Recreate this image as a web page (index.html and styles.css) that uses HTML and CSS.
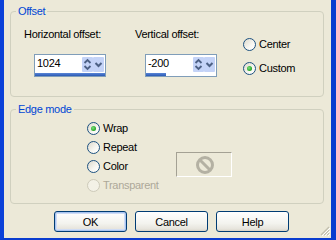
FILE: index.html
```html
<!DOCTYPE html>
<html lang="en">

<head>
    <meta charset="UTF-8" />
    <title>Offset</title>
    <link rel="stylesheet" href="styles.css">
</head>

<body>
    <div class="window">
        <fieldset class="group offset-group">
            <legend>Offset</legend>
            <div class="offset-body">
                <div class="field field-h">
                    <label>Horizontal offset:</label>
                    <div class="spin">
                        <div class="spin-top">
                            <span class="spin-value">1024</span>
                            <svg class="spin-btns" width="22" height="15" viewBox="0 0 22 15">
                                <rect x="0" y="0" width="11" height="15" rx="1" fill="#c4d3f7" />
                                <rect x="11" y="0" width="11" height="15" rx="1" fill="#c4d3f7" />
                                <path d="M2.5 6 L5.5 3 L8.5 6" fill="none" stroke="#4d6185" stroke-width="1.8" />
                                <path d="M2.5 9 L5.5 12 L8.5 9" fill="none" stroke="#4d6185" stroke-width="1.8" />
                                <path d="M13.5 6 L16.5 9 L19.5 6" fill="none" stroke="#4d6185" stroke-width="2" />
                            </svg>
                        </div>
                        <div class="spin-track"><div class="spin-bar" style="width: 100%"></div></div>
                    </div>
                </div>
                <div class="field field-v">
                    <label>Vertical offset:</label>
                    <div class="spin">
                        <div class="spin-top">
                            <span class="spin-value">-200</span>
                            <svg class="spin-btns" width="22" height="15" viewBox="0 0 22 15">
                                <rect x="0" y="0" width="11" height="15" rx="1" fill="#c4d3f7" />
                                <rect x="11" y="0" width="11" height="15" rx="1" fill="#c4d3f7" />
                                <path d="M2.5 6 L5.5 3 L8.5 6" fill="none" stroke="#4d6185" stroke-width="1.8" />
                                <path d="M2.5 9 L5.5 12 L8.5 9" fill="none" stroke="#4d6185" stroke-width="1.8" />
                                <path d="M13.5 6 L16.5 9 L19.5 6" fill="none" stroke="#4d6185" stroke-width="2" />
                            </svg>
                        </div>
                        <div class="spin-track"><div class="spin-bar" style="width: 28%"></div></div>
                    </div>
                </div>
                <div class="radio-col">
                    <div class="radio-row"><span class="radio"></span><span>Center</span></div>
                    <div class="radio-row"><span class="radio checked"></span><span>Custom</span></div>
                </div>
            </div>
        </fieldset>

        <fieldset class="group edge-group">
            <legend>Edge mode</legend>
            <div class="edge-body">
                <div class="radio-row"><span class="radio checked"></span><span>Wrap</span></div>
                <div class="radio-row"><span class="radio"></span><span>Repeat</span></div>
                <div class="radio-row">
                    <span class="radio"></span><span class="color-label">Color</span>
                    <div class="swatch">
                        <svg width="20" height="20" viewBox="0 0 20 20">
                            <circle cx="10" cy="10" r="7.5" fill="none" stroke="#b4b1a3" stroke-width="3" />
                            <path d="M5 5 L15 15" stroke="#b4b1a3" stroke-width="3" />
                        </svg>
                    </div>
                </div>
                <div class="radio-row disabled"><span class="radio"></span><span>Transparent</span></div>
            </div>
        </fieldset>

        <div class="buttons">
            <button class="btn default">OK</button>
            <button class="btn">Cancel</button>
            <button class="btn">Help</button>
            <svg class="grip" width="10" height="10" viewBox="0 0 10 10">
                <path d="M9 1 L1 9 M9 4 L4 9 M9 7 L7 9" stroke="#c2bfae" stroke-width="1.2" />
                <path d="M10 2 L2 10 M10 5 L5 10 M10 8 L8 10" stroke="#ffffff" stroke-width="1" />
            </svg>
        </div>
    </div>
</body>

</html>
```

FILE: styles.css
```css
* {
    box-sizing: border-box;
    margin: 0;
    padding: 0;
}

body {
    width: 336px;
    height: 240px;
    font-family: 'Liberation Sans', Arial, sans-serif;
    font-size: 11px;
    line-height: 13px;
    letter-spacing: -0.3px;
    color: #000;
    overflow: hidden;
}

.window {
    width: 336px;
    height: 240px;
    background-color: #ece9d8;
    border-left: 4px solid #0b41d8;
    border-right: 5px solid #0a3ccf;
    border-bottom: 2px solid #0a3ccf;
    display: flex;
    flex-direction: column;
}

.group {
    border: 1px solid #d0d0bf;
    border-radius: 4px;
    margin: 0 7px 0 6px;
    padding: 0;
    min-width: 0;
}

.group legend {
    color: #0046d5;
    padding: 0 2px;
    margin-left: 5px;
    line-height: 13px;
}

.offset-group {
    margin-top: 5px;
}

.offset-body {
    display: flex;
    padding: 10px 0 18px 13px;
}

.field {
    display: flex;
    flex-direction: column;
    align-items: flex-start;
}

.field-h {
    width: 111px;
}

.field-v {
    width: 108px;
}

.spin {
    width: 72px;
    height: 23px;
    margin: 13px 0 0 10px;
    border: 1px solid #7f9db9;
    background: #fff;
    display: flex;
    flex-direction: column;
}

.spin-top {
    height: 18px;
    display: flex;
    align-items: flex-start;
    justify-content: space-between;
    padding: 2px 1px 0 2px;
}

.spin-btns {
    display: block;
}

.spin-track {
    height: 3px;
}

.spin-bar {
    height: 3px;
    background: linear-gradient(#5a86d6, #2a59b5);
}

.radio-col {
    display: flex;
    flex-direction: column;
    gap: 5px;
    padding-top: 7px;
}

.radio-row {
    display: flex;
    align-items: center;
    height: 19px;
    gap: 3px;
}

.radio {
    width: 13px;
    height: 13px;
    border-radius: 50%;
    border: 1px solid #1c5180;
    background: linear-gradient(135deg, #dcd9cc, #f8f7f2 60%, #fff);
    display: flex;
    align-items: center;
    justify-content: center;
}

.radio.checked::after {
    content: '';
    width: 5px;
    height: 5px;
    border-radius: 50%;
    background: radial-gradient(circle at 40% 40%, #7ee27e, #21a121 70%);
}

.disabled {
    color: #aca899;
}

.disabled .radio {
    border-color: #cdcab9;
    background: #f3f1e6;
}

.edge-group {
    margin-top: 6px;
}

.edge-body {
    display: flex;
    flex-direction: column;
    padding: 3px 0 8px 76px;
}

.color-label {
    width: 70px;
}

.swatch {
    width: 56px;
    height: 25px;
    margin-top: -4px;
    border-top: 1px solid #a4a194;
    border-left: 1px solid #a4a194;
    border-bottom: 1px solid #fff;
    border-right: 1px solid #fff;
    display: flex;
    align-items: center;
    justify-content: center;
    padding-left: 1px;
}

.buttons {
    display: flex;
    gap: 8px;
    margin-top: 7px;
    padding-left: 50px;
    flex: 1;
}

.btn {
    width: 73px;
    height: 21px;
    border: 1px solid #003c74;
    border-radius: 3px;
    background: linear-gradient(#ffffff, #f3f3ee 60%, #e6e4dc 90%, #d6d0c5);
    font-family: inherit;
    font-size: 11px;
    letter-spacing: -0.3px;
    color: #000;
}

.btn.default {
    box-shadow: inset 0 0 0 1px #a8c4f0, inset 0 0 0 2px #cfdcf5;
}

.grip {
    margin-left: auto;
    align-self: flex-end;
    margin-right: 1px;
    margin-bottom: 2px;
}
```
